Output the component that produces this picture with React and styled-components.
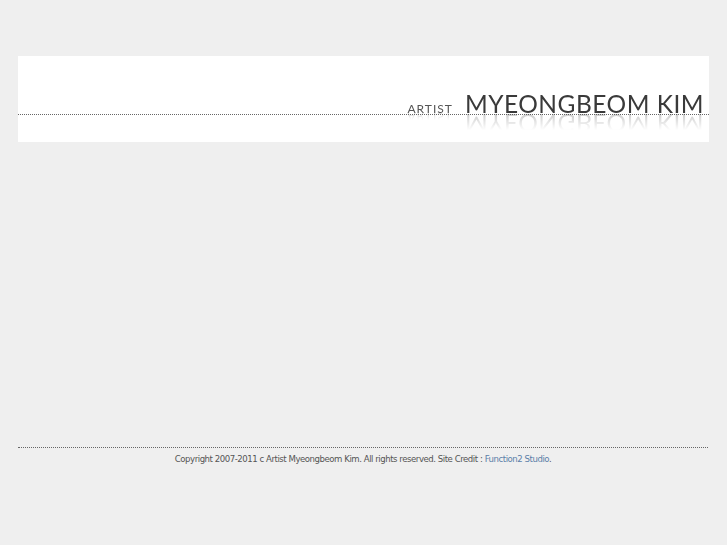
import React from 'react'
import styled, { createGlobalStyle } from 'styled-components'

const Global = createGlobalStyle`
  html, body {
    margin: 0;
    padding: 0;
    background: #efefef;
  }
`

const Page = styled.div`
  padding: 56px 18px 0;
  font-family: 'DejaVu Sans', sans-serif;
`

const Header = styled.header`
  background: #ffffff;
  height: 86px;
  display: flex;
  flex-direction: column;
`

const TitleRow = styled.div`
  height: 59px;
  flex-shrink: 0;
  border-bottom: 1px dotted #666;
  display: flex;
  justify-content: flex-end;
  align-items: flex-end;
  padding-right: 5px;
  box-sizing: border-box;
`

const Title = styled.h1`
  margin: 0 0 -2px;
  display: flex;
  align-items: baseline;
  gap: 12px;
  line-height: 1;
  font-weight: normal;
`

const Small = styled.span`
  display: inline-block;
  font-family: 'Lato', sans-serif;
  font-size: 12px;
  letter-spacing: 1px;
  color: #555;
  -webkit-box-reflect: below -4px linear-gradient(to bottom, transparent 25%, rgba(0, 0, 0, 0.3));
`

const Big = styled.span`
  display: inline-block;
  font-family: 'Lato', sans-serif;
  font-size: 24.5px;
  letter-spacing: 0.5px;
  color: #3a3a3a;
  -webkit-box-reflect: below -5px linear-gradient(to bottom, transparent 20%, rgba(0, 0, 0, 0.32));
`

const Content = styled.main`
  height: 305px;
`

const Footer = styled.footer`
  border-top: 1px dotted #666;
  margin-right: 1px;
  padding-top: 5px;
  text-align: center;
  font-family: 'DejaVu Sans', sans-serif;
  font-stretch: condensed;
  font-size: 9.5px;
  letter-spacing: -0.45px;
  color: #555;
`

const Link = styled.a`
  color: #5b7ea8;
  text-decoration: none;
`

export default function App() {
  return (
    <>
      <Global />
      <Page>
        <Header>
          <TitleRow>
            <Title>
              <Small>ARTIST</Small>
              <Big>MYEONGBEOM KIM</Big>
            </Title>
          </TitleRow>
        </Header>
        <Content />
        <Footer>
          Copyright 2007-2011 c Artist Myeongbeom Kim. All rights reserved. Site Credit : <Link href="#">Function2 Studio</Link>.
        </Footer>
      </Page>
    </>
  )
}
